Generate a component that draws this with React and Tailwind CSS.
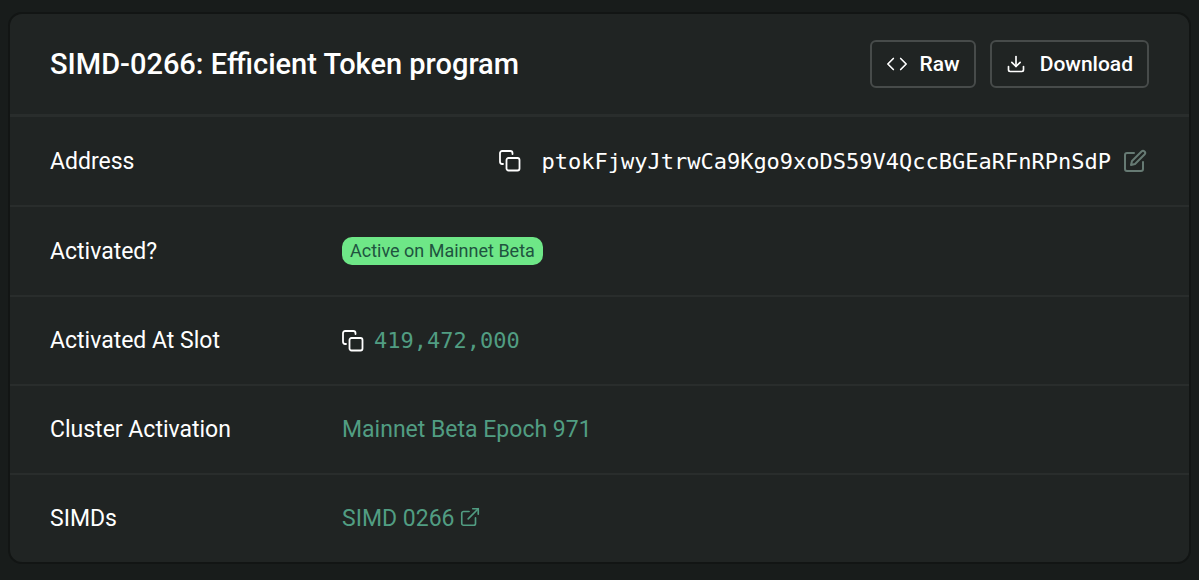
import { Code, Download, ExternalLink } from "lucide-react";
import { FiEdit } from "react-icons/fi";

const buttonClass =
  "flex h-12 items-center rounded-md border-2 border-[#474b4a] px-3.5 text-[21px] font-medium text-white";

function CopyIcon() {
  return (
    <svg viewBox="0 0 22 22" className="size-[22px] shrink-0" fill="none" stroke="currentColor" strokeWidth="1.8" strokeLinecap="round" strokeLinejoin="round" aria-hidden="true">
      <rect x="7.5" y="8" width="13" height="12.5" rx="2" />
      <path d="M4 14H3.2A2.2 2.2 0 0 1 1 11.8V3.2A2.2 2.2 0 0 1 3.2 1H11.3A2.2 2.2 0 0 1 13.5 3.2V4" />
    </svg>
  );
}

function Row({ label, children, last }) {
  return (
    <tr className={last ? "" : "border-b-2 border-[#292d2c]"}>
      <th scope="row" className="w-[332px] py-7 pl-10 text-left font-normal">
        {label}
      </th>
      <td className="py-7 pr-10">{children}</td>
    </tr>
  );
}

export default function App() {
  return (
    <main className="min-h-screen bg-[#181c1b] px-2 pt-3 pb-4 font-['Roboto','Liberation_Sans',sans-serif] text-[23px] leading-[31px] text-white">
      <section className="overflow-hidden rounded-[14px] border-2 border-[#121514] bg-[#202423]">
        <header className="flex items-center justify-between border-b-3 border-[#292d2c] px-10 py-[26px]">
          <h1 className="text-[29px] font-medium">SIMD-0266: Efficient Token program</h1>
          <div className="flex gap-3.5">
            <button type="button" className={`${buttonClass} gap-3`}>
              <Code className="size-[22px]" strokeWidth={1.8} aria-hidden="true" />
              Raw
            </button>
            <button type="button" className={`${buttonClass} gap-3.5`}>
              <Download className="size-5" strokeWidth={2} aria-hidden="true" />
              Download
            </button>
          </div>
        </header>
        <table className="w-full border-collapse">
          <tbody>
            <Row label="Address">
              <div className="flex h-8 items-center justify-end pr-0.5">
                <button type="button" aria-label="Copy address" className="mr-5">
                  <CopyIcon />
                </button>
                <span className="font-['DejaVu_Sans_Mono',monospace] text-[22px]">
                  ptokFjwyJtrwCa9Kgo9xoDS59V4QccBGEaRFnRPnSdP
                </span>
                <button type="button" aria-label="Edit address label" className="ml-3 text-[#667a73]">
                  <FiEdit className="size-6" aria-hidden="true" />
                </button>
              </div>
            </Row>
            <Row label="Activated?">
              <div className="flex h-8 items-center">
                <span className="rounded-[10px] bg-[#6ee787] px-2 text-[18px] leading-7 text-[#20543f]">
                  Active on Mainnet Beta
                </span>
              </div>
            </Row>
            <Row label="Activated At Slot">
              <div className="flex items-center gap-2.5">
                <button type="button" aria-label="Copy slot">
                  <CopyIcon />
                </button>
                <a href="#slot" className="font-['DejaVu_Sans_Mono',monospace] text-[22px] text-[#519d82]">
                  419,472,000
                </a>
              </div>
            </Row>
            <Row label="Cluster Activation">
              <a href="#epoch" className="block text-[#519d82]">
                Mainnet Beta Epoch 971
              </a>
            </Row>
            <Row label="SIMDs" last>
              <a href="#simd" className="flex items-center gap-1 text-[#519d82]">
                SIMD 0266
                <ExternalLink className="mb-1 size-[22px]" strokeWidth={1.8} aria-hidden="true" />
              </a>
            </Row>
          </tbody>
        </table>
      </section>
    </main>
  );
}
